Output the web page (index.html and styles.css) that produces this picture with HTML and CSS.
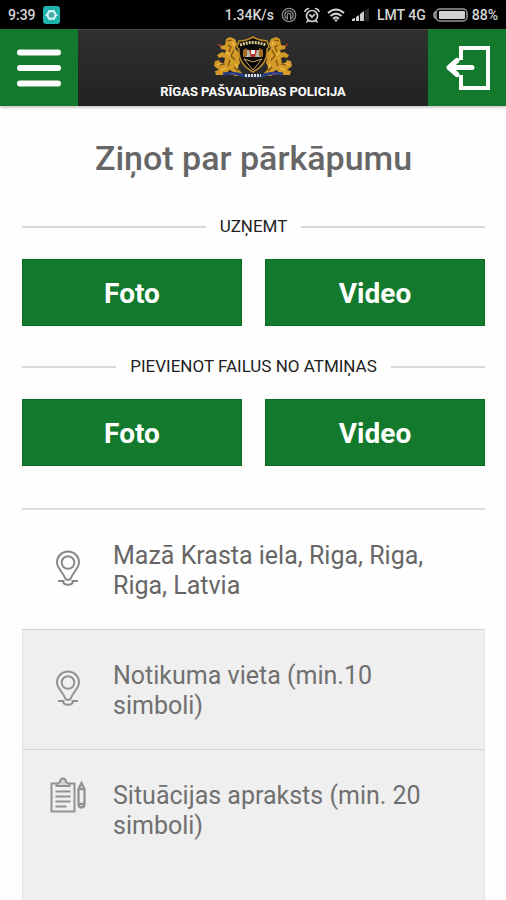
FILE: index.html
```html
<!DOCTYPE html>
<html lang="lv">
<head>
<meta charset="utf-8">
<meta name="viewport" content="width=device-width, initial-scale=1">
<title>Ziņot par pārkāpumu</title>
<link rel="stylesheet" href="styles.css">
</head>
<body>
<div class="status">
  <div class="status-group">
    <span>9:39</span>
    <svg class="app-badge" width="17" height="18" viewBox="0 0 17 18" aria-hidden="true">
      <rect width="17" height="18" rx="3" fill="#20b2ac"/>
      <circle cx="8.500" cy="9" r="4" fill="#48aaa4" stroke="#d5f5f2" stroke-width="2"/>
      <path d="M2.500 9h3M11.500 9h3M5.500 4l1.500 2.500M11.500 4L10 6.500M5.500 14L7 11.500M11.500 14L10 11.500" stroke="#d5f5f2" stroke-width="1.300"/>
    </svg>
  </div>
  <div class="status-group">
    <span>1.34K/s</span>
    <svg width="16" height="16" viewBox="0 0 16 16" fill="none" stroke="#8a8a8a" stroke-width="1.300" aria-hidden="true">
      <circle cx="8" cy="8" r="6.700"/>
      <path d="M5.500 11.500A4.200 4.200 0 1 1 10.500 11.500M6.300 12.800V8a1.700 1.700 0 0 1 3.400 0v4.800"/>
    </svg>
    <svg width="16" height="16" viewBox="0 0 16 16" fill="none" stroke="#d0d0d0" stroke-width="1.700" stroke-linecap="round" aria-hidden="true">
      <circle cx="8" cy="9" r="5.500"/>
      <path d="M1 4.200Q2 1.800 4.500 1.500M15 4.200Q14 1.800 11.500 1.500M5.800 8l2.200 2 2.500-2.500M4 13.800l-1 1M12 13.800l1 1"/>
    </svg>
    <svg width="18" height="14" viewBox="0 0 18 14" fill="none" stroke="#d6d6d6" stroke-width="2" aria-hidden="true">
      <path d="M1 5q8-7 16 0M3.500 8q5.500-4.700 11 0M6 10.700q3-2.600 6 0"/>
      <path d="M7 11.500h4L9 14z" fill="#d6d6d6" stroke="none"/>
    </svg>
    <svg width="18" height="14" viewBox="0 0 18 14" aria-hidden="true">
      <path d="M0 13v-2l3-1v3zM4 13V9l3-2v6zM8 13V6l4-3v10z" fill="#cfcfcf"/>
      <path d="M13 13V2l4-2v13z" fill="#292929"/>
    </svg>
    <span>LMT 4G</span>
    <span class="battery">
      <svg width="35" height="14" viewBox="0 0 35 14" aria-hidden="true">
        <rect x="3" y="1" width="31" height="12" rx="4" fill="none" stroke="#9a9a9a" stroke-width="1.500"/>
        <path d="M3 4Q1 4 1 7t2 3" fill="none" stroke="#aaa" stroke-width="1.500"/>
        <rect x="6" y="3" width="26" height="8" rx="1" fill="#d2d2d2"/>
      </svg>
      88%
    </span>
  </div>
</div>

<header class="topbar">
  <button class="bar-button" type="button" aria-label="Izvēlne">
    <svg width="46" height="40" viewBox="0 0 46 40" stroke="#fff" stroke-width="6" stroke-linecap="round" aria-hidden="true">
      <path d="M4 4.500h38M4 20h38M4 35.500h38"/>
    </svg>
  </button>
  <div class="brand">
    <svg width="80" height="42" viewBox="0 0 80 42" aria-hidden="true">
      <defs>
        <g id="lion">
          <path d="M13 3l4-2 5 2 2 5-2 4 4 5 4-3 1 3-5 5 1 5-3 5 5 5-1 3h-7l-2-5-3-1-3 5H3l-1-4 4-1-5-4 1-5 4-1 2 4 3-1 1-5-3-1-3 1-2-3 5-3 3 1 1-3-5-1-1-3 5-1z" fill="#d39a27"/>
          <path d="M14 5l5-1M15 9l3 2-2 5M21 14l-3 6 4 4M6 29l6-1M15 30l2-6M21 31l4 4" fill="none" stroke="#79500f" stroke-width="1.200"/>
          <path d="M4 29l5-2M13 16l4 3M20 6l1 4M8 34l5-2M23 28l2 4" fill="none" stroke="#f2c44b" stroke-width="1.200"/>
          <path d="M5 8l3 2" stroke="#b63a28" stroke-width="1.500"/>
        </g>
      </defs>
      <use href="#lion"/>
      <use href="#lion" transform="matrix(-1 0 0 1 80 0)"/>
      <path d="M10 38q13-2 21 2h18q8-4 21-2" fill="none" stroke="#273f80" stroke-width="3"/>
      <path d="M17 38h5M59 38h5" stroke="#53408e" stroke-width="2"/>
      <path d="M26 5q7 0 14-4 7 4 14 4l2 6-2 2q1 15-14 23-15-8-14-23l-2-2z" fill="#0b0b0b" stroke="#ba8b27" stroke-width="1.500"/>
      <path d="M27 9q13-5 26 0" fill="none" stroke="#d9c995" stroke-width="3" stroke-dasharray="2 1"/>
      <path d="M32 14h16v7H32z" fill="#b9b3a6"/>
      <path d="M36 14h8l-2 7h-4z" fill="#b52e29"/>
      <path d="M38 14h4v4h-4z" fill="#eee"/>
      <path d="M30 14l4-2v8l-4 1zM46 12l4 2v7l-4-1z" fill="#a36b20"/>
      <path d="M31 23l9 3 9-3-9 11z" fill="#020202" stroke="#c4a65b"/>
      <path d="M32 39.500h16" stroke="#dcd8cb" stroke-width="3" stroke-dasharray="2 1"/>
    </svg>
    <span class="brand-name">RĪGAS PAŠVALDĪBAS POLICIJA</span>
  </div>
  <button class="bar-button" type="button" aria-label="Iziet">
    <svg width="46" height="46" viewBox="0 0 46 46" fill="none" stroke="#fff" stroke-width="4" aria-hidden="true">
      <path d="M17 15V3h27v40H17V30"/>
      <path d="M28 22.500H5M13 15.500l-8 7 8 7" stroke-width="5" stroke-linecap="round" stroke-linejoin="round"/>
    </svg>
  </button>
</header>

<main class="page">
  <h1 class="title">Ziņot par pārkāpumu</h1>

  <section class="capture">
    <h2 class="divider">UZŅEMT</h2>
    <div class="actions">
      <button class="action" type="button">Foto</button>
      <button class="action" type="button">Video</button>
    </div>
  </section>

  <section class="capture">
    <h2 class="divider">PIEVIENOT FAILUS NO ATMIŅAS</h2>
    <div class="actions">
      <button class="action" type="button">Foto</button>
      <button class="action" type="button">Video</button>
    </div>
  </section>

  <form class="report">
    <div class="field field-plain">
      <label class="field-icon" for="address" aria-label="Adrese">
        <svg width="26" height="37" viewBox="0 0 26 37" fill="none" stroke="#888" stroke-width="2" aria-hidden="true">
          <path d="M13 1.500C6.500 1.500 2 6.500 2 12.500c0 5.500 5.500 9 8.300 16q2.700 3 5.400 0c2.800-7 8.300-10.500 8.300-16 0-6-4.500-11-11-11z"/>
          <circle cx="13" cy="12.500" r="6.300"/>
          <path d="M3 31h6.500M16.500 31H23M8 31q0 3.800 5 3.800t5-3.800"/>
        </svg>
      </label>
      <textarea id="address" class="field-text" rows="2">Mazā Krasta iela, Riga, Riga, Riga, Latvia</textarea>
    </div>
    <div class="field field-shaded">
      <label class="field-icon" for="place" aria-label="Notikuma vieta">
        <svg width="26" height="37" viewBox="0 0 26 37" fill="none" stroke="#929292" stroke-width="2" aria-hidden="true">
          <path d="M13 1.500C6.500 1.500 2 6.500 2 12.500c0 5.500 5.500 9 8.300 16q2.700 3 5.400 0c2.800-7 8.300-10.500 8.300-16 0-6-4.500-11-11-11z"/>
          <circle cx="13" cy="12.500" r="6.300"/>
          <path d="M3 31h6.500M16.500 31H23M8 31q0 3.800 5 3.800t5-3.800"/>
        </svg>
      </label>
      <textarea id="place" class="field-text" rows="2" placeholder="Notikuma vieta (min.10 simboli)"></textarea>
    </div>
    <div class="field field-shaded field-tall">
      <label class="field-icon" for="description" aria-label="Situācijas apraksts">
        <svg width="36" height="37" viewBox="0 0 36 37" fill="none" stroke="#929292" stroke-width="2" aria-hidden="true">
          <path d="M7 6.500H1.500v28h23v-28H19"/>
          <path d="M6.500 9V7l3.500-2q.5-3.500 3-3.500T16 5l3.500 2v2z" fill="#d6d6d6"/>
          <path d="M5.500 14.500h15M5.500 19.500h15M5.500 24.500h15M5.500 29.500h11"/>
          <path d="M28.500 12L31.500 6l3 6v15q0 3.500-3 3.500t-3-3.500zM28.500 12h6M28.500 27h6" stroke-width="2.300"/>
        </svg>
      </label>
      <textarea id="description" class="field-text" rows="4" placeholder="Situācijas apraksts (min. 20 simboli)"></textarea>
    </div>
  </form>
</main>
</body>
</html>
```
FILE: styles.css
```css
* {
  box-sizing: border-box;
}

body {
  margin: 0;
  background: #fefefe;
  font-family: Roboto, "Liberation Sans", sans-serif;
  overflow-x: hidden;
}

button {
  border: 0;
  border-radius: 0;
  padding: 0;
  font-family: inherit;
  color: #fff;
  background: #137a2d;
  cursor: pointer;
}

svg {
  display: block;
  flex: none;
}

.status {
  display: flex;
  justify-content: space-between;
  align-items: center;
  height: 29px;
  padding: 0 8px;
  background: #000;
  color: #d6d6d6;
  font-size: 14px;
  font-weight: 500;
  white-space: nowrap;
}

.status-group {
  display: flex;
  align-items: center;
  gap: 7px;
}

.battery {
  display: flex;
  align-items: center;
  gap: 4px;
}

.topbar {
  display: flex;
  height: 77px;
  background: linear-gradient(#303030, #222);
  box-shadow: 0 1px 3px rgba(0, 0, 0, 0.3);
}

.bar-button {
  display: flex;
  flex: none;
  align-items: center;
  justify-content: center;
  width: 78px;
}

.brand {
  display: flex;
  flex: 1;
  flex-direction: column;
  align-items: center;
  padding-top: 6px;
  border-top: 1px solid #484848;
}

.brand-name {
  margin-top: 5px;
  color: #fff;
  font-size: 13px;
  font-weight: 700;
  line-height: 18px;
  white-space: nowrap;
}

.page {
  padding: 0 21px 0 22px;
}

.title {
  margin: 32px 0 0;
  color: #666;
  font-size: 34px;
  font-weight: 500;
  line-height: 40px;
  text-align: center;
}

.capture {
  margin-top: 30px;
}

.title + .capture {
  margin-top: 38px;
}

.divider {
  display: flex;
  align-items: center;
  gap: 14px;
  margin: 0 0 22px;
  color: #222;
  font-size: 17px;
  font-weight: 400;
  line-height: 21px;
  white-space: nowrap;
}

.divider::before,
.divider::after {
  content: "";
  flex: 1;
  height: 2px;
  background: #d9d9d9;
}

.actions {
  display: grid;
  grid-template-columns: 1fr 1fr;
  gap: 23px;
}

.action {
  height: 67px;
  padding-top: 2px;
  border: 1px solid #0b6a20;
  font-size: 28px;
  font-weight: 700;
}

.report {
  margin-top: 42px;
  border-top: 2px solid #dcdcdc;
}

.field {
  display: flex;
  height: 120px;
}

.field-plain {
  height: 119px;
}

.field-shaded {
  border-top: 1px solid #d4d4d4;
  background: #efefef;
  box-shadow: inset 1px 0 #e2e2e2, inset -1px 0 #e2e2e2;
}

.field-tall {
  height: 160px;
}

.field-icon {
  display: flex;
  flex: none;
  justify-content: center;
  width: 91px;
  padding-top: 40px;
}

.field-tall .field-icon {
  padding-top: 27px;
}

.field-text {
  display: block;
  flex: 1;
  min-width: 0;
  margin: 31px 32px 0 0;
  padding: 0;
  border: 0;
  outline: 0;
  resize: none;
  overflow: hidden;
  background: transparent;
  color: #666;
  font: 400 25px/30px Roboto, "Liberation Sans", sans-serif;
}

.field-text::placeholder {
  color: #707070;
  opacity: 1;
}
```
